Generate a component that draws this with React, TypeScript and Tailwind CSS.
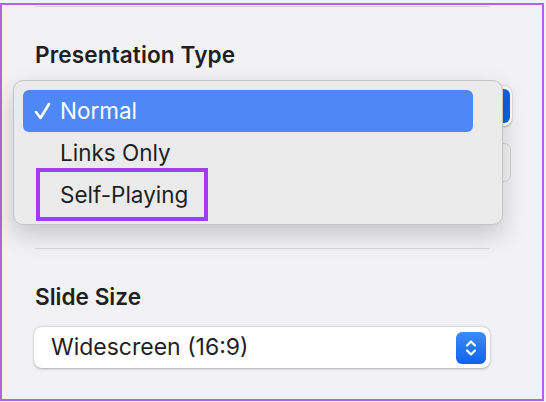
import React from 'react';

const font = { fontFamily: 'Inter, "Noto Sans", sans-serif' };

function Chevrons() {
  return (
    <svg width="14" height="20" viewBox="0 0 14 20" fill="none" stroke="white" strokeWidth="2.2" strokeLinecap="round" strokeLinejoin="round">
      <path d="M3 7.5 L7 3.5 L11 7.5" />
      <path d="M3 12.5 L7 16.5 L11 12.5" />
    </svg>
  );
}

function Check() {
  return (
    <svg width="17" height="18" viewBox="0 0 17 18" fill="none" stroke="white" strokeWidth="2.6" strokeLinecap="round" strokeLinejoin="round">
      <path d="M2 10 L6.5 16 L15 2" />
    </svg>
  );
}

export default function App() {
  return (
    <div className="relative w-[546px] h-[402px] overflow-hidden bg-[#f2f2f4] pt-[3px] text-[#1f1f1f]" style={font}>
      <div className="w-[544px] h-[398px] border-2 border-[#b562e8] flex flex-col px-[33px]">
        <div className="mt-px h-px w-[455px] bg-[#d9d9db]" />

        <div className="mt-[37px] h-[22px] leading-[22px] text-[22.6px] font-semibold tracking-[0.1px]">Presentation Type</div>

        {/* underlying controls, mostly hidden by the menu */}
        <div className="mt-[20px] ml-[-1px] w-[478px] h-[40px] rounded-[8px] bg-white shadow-[0_0.5px_2px_rgba(0,0,0,0.3)] flex items-center justify-end pr-[2px]">
          <div className="w-[30px] h-[34px] rounded-[6px] bg-[#0b63ec]" />
        </div>
        <div className="mt-[17px] self-end mr-[-2px] w-[30px] h-[39px] rounded-[7px] border border-[#d2d2d4] bg-[#f4f4f5]" />

        <div className="mt-[66px] h-px w-[455px] bg-[#d9d9db]" />

        <div className="mt-[37px] h-[22px] leading-[22px] text-[22.6px] font-semibold">Slide Size</div>

        <div className="mt-[19px] ml-[-1px] w-[456px] h-[41px] rounded-[8px] bg-white shadow-[0_0.5px_2.5px_rgba(0,0,0,0.3)] flex items-center justify-between pl-[17px] pr-[4px]">
          <span className="text-[23px] leading-none">Widescreen (16:9)</span>
          <div className="w-[30px] h-[32px] rounded-[6px] bg-gradient-to-b from-[#3b8cf8] to-[#0a62ef] flex items-center justify-center">
            <Chevrons />
          </div>
        </div>
      </div>

      {/* popup menu */}
      <div className="absolute left-[13px] top-[80px] w-[490px] h-[145px] rounded-[10px] border border-[#c4c4c6] bg-[#ebebeb] shadow-[0_10px_24px_rgba(0,0,0,0.18)] pl-[9px] pr-[29px] pt-[9px]">
        <div className="h-[42px] rounded-[6px] bg-[#4d88f6] flex items-center text-white">
          <div className="w-[37px] flex justify-center pl-[2px]"><Check /></div>
          <span className="text-[22.5px] leading-none">Normal</span>
        </div>
        <div className="h-[42px] flex items-center pl-[37px]">
          <span className="text-[22.5px] leading-none">Links Only</span>
        </div>
        <div className="h-[42px] flex items-center pl-[37px]">
          <span className="text-[22.5px] leading-none">Self-Playing</span>
        </div>
      </div>

      <div className="absolute left-[36px] top-[168px] w-[172px] h-[53px] border-4 border-[#a23ef2]" />
    </div>
  );
}
